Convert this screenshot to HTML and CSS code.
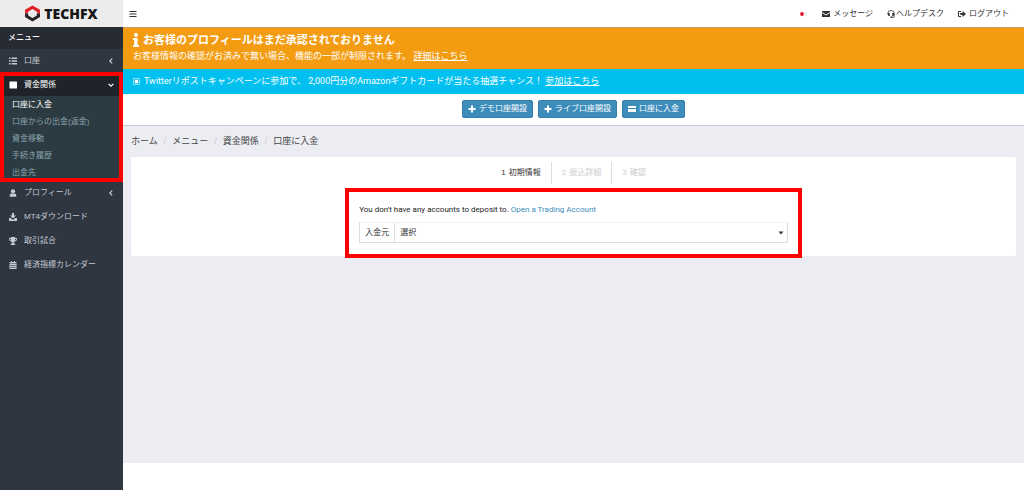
FILE: index.html
```html
<!DOCTYPE html>
<html lang="ja">
<head>
<meta charset="utf-8">
<meta name="viewport" content="width=device-width, initial-scale=1">
<title>TECHFX 口座に入金</title>
<link rel="stylesheet" href="styles.css">
</head>
<body>
<div class="app">
  <aside class="sidebar">
    <a class="logo" href="#">
      <svg class="logo-mark" viewBox="0 0 16 18" aria-hidden="true">
        <path fill="#2b2326" d="M0 8.800v4L8 17.600l8-4.800v-4h-3.400V11L8 13.800 3.400 11V8.800z"/>
        <path fill="#e02128" d="M8 .4 0 5v4.400l3.400-1.800V7L8 4.200 12.600 7v.6L16 9.400V5z"/>
      </svg>
      <span class="logo-text">TECHFX</span>
    </a>
    <div class="menu-title">メニュー</div>
    <nav>
      <ul class="menu">
        <li><a class="menu-link" href="#">
          <svg class="icon" viewBox="0 0 16 16" aria-hidden="true"><path d="M0 1h3v3H0zM5 1h11v3H5zM0 6.500h3v3H0zM5 6.500h11v3H5zM0 12h3v3H0zM5 12h11v3H5z"/></svg>
          <span>口座</span>
          <svg class="arrow" viewBox="0 0 10 10" aria-hidden="true"><path d="M7 1 3 5l4 4"/></svg></a></li>
        <li class="active highlight"><a class="menu-link" href="#">
          <svg class="icon" viewBox="0 0 16 16" aria-hidden="true"><rect x="1" y="1" width="15" height="14" rx="1"/></svg>
          <span>資金関係</span>
          <svg class="arrow" viewBox="0 0 10 10" aria-hidden="true"><path d="m1 3 4 4 4-4"/></svg></a>
          <ul class="submenu">
            <li><a class="current" href="#">口座に入金</a></li>
            <li><a href="#">口座からの出金(返金)</a></li>
            <li><a href="#">資金移動</a></li>
            <li><a href="#">手続き履歴</a></li>
            <li><a href="#">出金先</a></li>
          </ul></li>
        <li><a class="menu-link" href="#">
          <svg class="icon" viewBox="0 0 16 16" aria-hidden="true"><circle cx="8" cy="4.500" r="4.200"/><path d="M1.500 15.500V12q0-3 3-3h7q3 0 3 3v3.500z"/></svg>
          <span>プロフィール</span>
          <svg class="arrow" viewBox="0 0 10 10" aria-hidden="true"><path d="M7 1 3 5l4 4"/></svg></a></li>
        <li><a class="menu-link" href="#">
          <svg class="icon" viewBox="0 0 16 16" aria-hidden="true"><path d="M6 0h4v5h4l-6 6-6-6h4zM0 10h3.500L8 14l4.500-4H16v6H0z"/></svg>
          <span>MT4ダウンロード</span></a></li>
        <li><a class="menu-link" href="#">
          <svg class="icon" viewBox="0 0 16 16" aria-hidden="true"><path fill-rule="evenodd" d="M3.500 0h9v2H16v2q0 4-4.500 5-1 2-2 2v2h3v3h-9v-3h3v-2q-1 0-2-2Q0 8 0 4V2h3.500zM1.500 3.500q0 2.500 2.500 3.500l-.5-3.500zm13 0h-2L12 7q2.500-1 2.500-3.500z"/></svg>
          <span>取引試合</span></a></li>
        <li><a class="menu-link" href="#">
          <svg class="icon" viewBox="0 0 16 16" aria-hidden="true"><path fill-rule="evenodd" d="M1 2h3V0h2v2h4V0h2v2h3v3H1zM1 6h14v10H1zM3 8v2h2.500V8zm4 0v2h2.500V8zm4 0v2h2V8zm-8 4v2h2.500v-2zm4 0v2h2.500v-2zm4 0v2h2v-2z"/></svg>
          <span>経済指標カレンダー</span></a></li>
      </ul>
    </nav>
  </aside>

  <div class="main">
    <header class="topbar">
      <button class="toggle" type="button" aria-label="メニュー切替">
        <svg class="icon" viewBox="0 0 16 16" aria-hidden="true"><path d="M1 2h14v2H1zM1 7h14v2H1zM1 12h14v2H1z"/></svg>
      </button>
      <div class="top-links">
        <a class="flag" href="#" aria-label="日本語"><svg viewBox="0 0 10 8" aria-hidden="true"><circle cx="4" cy="4" r="1.900" fill="#e3122c"/><path d="M8 1.500v5" stroke="#ddd"/></svg></a>
        <a href="#"><svg class="icon" viewBox="0 0 16 16" aria-hidden="true"><path d="M0 2h16v2L8 9 0 4zM0 6l8 5 8-5v8H0z"/></svg>メッセージ</a>
        <a class="tight" href="#"><svg class="icon" viewBox="0 0 16 16" aria-hidden="true"><path fill="none" stroke="currentColor" stroke-width="1.600" d="M1.500 9V7q0-6 6.500-6t6.500 6v5q0 3-3 3H8"/><path d="M2 6h3.500v6H4q-2 0-2-2zM14 6h-3.500v6H12q2 0 2-2zM7 13h4v3H7z"/></svg>ヘルプデスク</a>
        <a href="#"><svg class="icon" viewBox="0 0 16 16" aria-hidden="true"><path d="M6 2v2H2v8h4v2H2q-2 0-2-2V4q0-2 2-2zM9 2l7 6-7 6v-4H4.500V6H9z"/></svg>ログアウト</a>
      </div>
    </header>

    <section class="notice warning">
      <h1><svg class="info" viewBox="0 0 6 14" aria-hidden="true"><circle cx="3" cy="2" r="2"/><path d="M0 5h4.500v7H6v2H0v-2h1.200V7H0z"/></svg>お客様のプロフィールはまだ承認されておりません</h1>
      <p>お客様情報の確認がお済みで無い場合、機能の一部が制限されます。 <a href="#">詳細はこちら</a></p>
    </section>
    <section class="notice promo">
      <svg class="mark" viewBox="0 0 8 8" aria-hidden="true"><path fill="none" stroke="#fff" stroke-opacity=".6" d="M.5.500h7v7h-7z"/><path fill="#fff" d="M2 2h4v4H2z"/></svg>
      <p>Twitterリポストキャンペーンに参加で、 2,000円分のAmazonギフトカードが当たる抽選チャンス！ <a href="#">参加はこちら</a></p>
    </section>

    <div class="actions">
      <button type="button"><svg class="icon" viewBox="0 0 16 16" aria-hidden="true"><path d="M6 1h4v5h5v4h-5v5H6v-5H1V6h5z"/></svg>デモ口座開設</button>
      <button type="button"><svg class="icon" viewBox="0 0 16 16" aria-hidden="true"><path d="M6 1h4v5h5v4h-5v5H6v-5H1V6h5z"/></svg>ライブ口座開設</button>
      <button type="button"><svg class="icon" viewBox="0 0 16 16" aria-hidden="true"><path d="M0 2h16v4H0zM0 8h16v6H0z"/></svg>口座に入金</button>
    </div>

    <main class="content">
      <ol class="breadcrumb">
        <li><a href="#">ホーム</a></li>
        <li><a href="#">メニュー</a></li>
        <li><a href="#">資金関係</a></li>
        <li>口座に入金</li>
      </ol>
      <section class="card">
        <ol class="steps">
          <li class="on"><span>1</span>初期情報</li>
          <li><span>2</span>振込詳細</li>
          <li><span>3</span>確認</li>
        </ol>
        <form class="deposit highlight">
          <p>You don't have any accounts to deposit to. <a href="#">Open a Trading Account</a></p>
          <div class="field">
            <label for="source">入金元</label>
            <div class="select">
              <select id="source"><option>選択</option></select>
              <svg viewBox="0 0 6 4" aria-hidden="true"><path d="M.5.500h5L3 3.500z"/></svg>
            </div>
          </div>
        </form>
      </section>
    </main>
    <footer class="footer"></footer>
  </div>
</div>
</body>
</html>
```
FILE: styles.css
```css
* { box-sizing: border-box; }

body {
  margin: 0;
  color: #333;
  background: #fff;
  font: 8px/16px "Liberation Sans", "Noto Sans CJK JP", sans-serif;
}

ul, ol { margin: 0; padding: 0; list-style: none; }
p, h1 { margin: 0; }
a { color: inherit; text-decoration: none; }
button, select { font: inherit; color: inherit; }
svg { flex: none; fill: currentColor; }

.icon { width: 8px; height: 8px; }

.app {
  display: grid;
  grid-template-columns: 123px minmax(0, 1fr);
  min-height: 100vh;
}

.highlight { position: relative; }
.highlight::after {
  content: "";
  position: absolute;
  inset: 0;
  border: 4px solid #f00;
  pointer-events: none;
}

/* Sidebar */
.sidebar { background: #2f3640; color: #c3ccd3; }
.logo {
  display: flex;
  align-items: center;
  justify-content: center;
  gap: 4px;
  height: 27px;
  background: #ececec;
  color: #161616;
}
.logo-mark { width: 15px; height: 17px; }
.logo-text { font: 800 14px/27px "Open Sans", sans-serif; }
.menu-title {
  padding: 0 8px;
  background: #262b34;
  color: #fff;
  font-weight: 500;
  line-height: 22px;
}
.menu-link {
  display: flex;
  align-items: center;
  gap: 7px;
  padding: 0 9px;
  line-height: 24px;
}
.arrow {
  width: 6px;
  height: 6px;
  margin-left: auto;
  fill: none;
  stroke: currentColor;
  stroke-width: 2;
}
.active { background: #2c3b41; }
.active > .menu-link { background: #1e2429; color: #fff; line-height: 23px; }
.active::after { inset: -1px 0; }
.submenu { color: #8aa4af; line-height: 17px; }
.submenu a { display: block; padding: 0 12px; }
.submenu .current { color: #fff; }

/* Main column */
.main { display: flex; flex-direction: column; }
.topbar {
  display: flex;
  align-items: center;
  justify-content: space-between;
  height: 28px;
  padding: 0 15px 0 6px;
  border-bottom: 1px solid #c99f55;
}
.toggle {
  display: flex;
  padding: 0;
  border: 0;
  background: none;
}
.top-links, .top-links a { display: flex; align-items: center; }
.top-links { gap: 14px; }
.top-links a { gap: 3px; }
.top-links .tight { gap: 1px; }
.flag svg { width: 10px; height: 8px; }

.notice { color: #fff; font-size: 9px; }
.notice a { text-decoration: underline; }
.warning { padding: 4px 10px 5px; background: #f39c12; }
.warning h1 {
  display: flex;
  align-items: center;
  gap: 4px;
  font-size: 11px;
  line-height: 16px;
}
.info { width: 6px; height: 14px; }
.promo {
  display: flex;
  align-items: center;
  gap: 4px;
  padding: 4px 10px 5px;
  background: #00c0ef;
  font-family: Roboto, "Noto Sans CJK JP", sans-serif;
}
.mark { width: 7px; height: 7px; }

.actions {
  display: flex;
  justify-content: center;
  gap: 5px;
  padding: 6px 0 7px;
  border-bottom: 1px solid #c8cad2;
}
.actions button {
  display: flex;
  align-items: center;
  gap: 3px;
  padding: 0 5px;
  border: 1px solid #367fa9;
  border-radius: 2px;
  background: #3c8dbc;
  color: #fff;
}

.content { flex: 1; padding: 7px 8px; background: #ecedf3; }
.breadcrumb { display: flex; font-size: 9px; line-height: 16px; color: #444; }
.breadcrumb li + li::before { content: "/"; padding: 0 6px; color: #ccc; }

.card {
  margin-top: 8px;
  padding: 5px 14px 0;
  border-radius: 2px;
  background: #fff;
}
.steps { display: flex; justify-content: center; line-height: 22px; color: #ccc; }
.steps li { display: flex; gap: 3px; padding: 0 10px; }
.steps li + li { border-left: 1px solid #ddd; }
.steps .on { color: #333; }

.deposit {
  width: 50%;
  margin: 0 auto;
  padding: 18px 0 13px;
}
.deposit::after { inset: 4px -14px -2px; }
.deposit p { color: #222; font-family: Roboto, sans-serif; }
.deposit p a { color: #3c8dbc; }
.field {
  display: flex;
  margin-top: 4px;
  border: 1px solid #ddd;
  border-top-color: #f2f2f2;
  line-height: 19px;
}
.field label { padding: 0 5px; border-right: 1px solid #ddd; }
.select { position: relative; flex: 1; }
.select select {
  display: block;
  width: 100%;
  height: 19px;
  padding: 0 5px;
  border: 0;
  appearance: none;
  background: none;
}
.select svg {
  position: absolute;
  top: 8px;
  right: 3px;
  width: 6px;
  height: 4px;
  pointer-events: none;
}

.footer { height: 27px; background: #fff; }
```
